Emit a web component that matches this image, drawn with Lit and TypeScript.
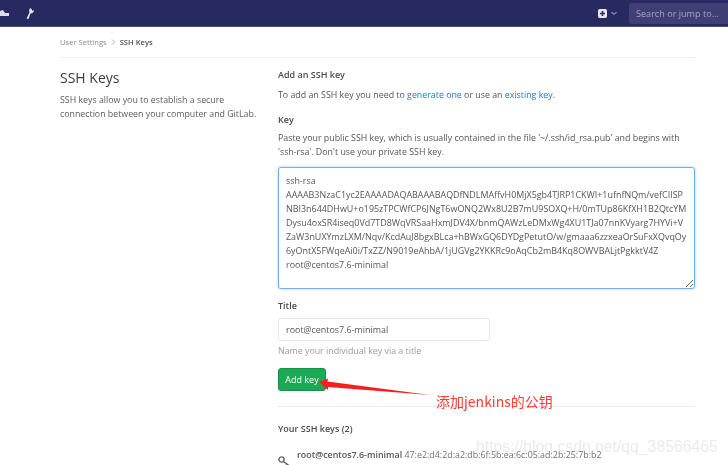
import { LitElement, html, css } from "lit";
import { customElement } from "lit/decorators.js";

const KEY = `ssh-rsa
AAAAB3NzaC1yc2EAAAADAQABAAABAQDfNDLMAffvH0MjX5gb4TJRP1CKWI+1ufnfNQm/vefCIISP
NBI3n644DHwU+o195zTPCWfCP6JNgT6wONQ2Wx8U2B7mU9SOXQ+H/0mTUp86KfXH1B2QtcYM
Dysu4oxSR4iseq0Vd7TD8WqVRSaaHxmJDV4X/bnmQAWzLeDMxWg4XU1TJa07nnKVyarg7HYVi+V
ZaW3nUXYmzLXM/Nqv/KcdAuJ8bgxBLca+hBWxGQ6DYDgPetutO/w/gmaaa6zzxeaOrSuFxXQvqOy
6yOntX5FWqeAi0i/TxZZ/N9019eAhbA/1jUGVg2YKKRc9oAqCb2mB4Kq8OWVBALjtPgkktV4Z
root@centos7.6-minimal`;

@customElement("app-root")
export class AppRoot extends LitElement {
  static styles = css`
    :host { display: block; width: 728px; height: 465px; overflow: hidden; position: relative; background: #fff;
      font-family: "Open Sans", "Noto Sans", sans-serif; font-size: 8.9px; color: #4f4f4f; filter: blur(0.45px); }
    .nav { height: 26px; background: #292961; border-bottom: 1px solid #4b4b80; display: flex; align-items: center; }
    .nav .chart { width: 9px; height: 7px; margin-top: 1px; flex: none; }
    .nav .wrench { margin-left: 16px; width: 9px; height: 11px; flex: none; }
    .spacer { flex: 1; }
    .plus { width: 9px; height: 9px; flex: none; }
    .chev { width: 6px; height: 5px; margin-left: 4px; flex: none; }
    .search { flex: none; width: 99px; margin-left: 12px; height: 21px; background: #3f3f74; border-radius: 3px 0 0 3px; color: #a4a4cc;
      display: flex; align-items: center; padding-left: 7px; font-size: 9.1px; box-sizing: border-box; white-space: nowrap; overflow: hidden; }
    .wrap { margin: 0 33px 0 60px; }
    .crumbs { height: 30px; display: flex; align-items: center; gap: 4px; border-bottom: 1px solid #f0f0f0; font-size: 7.6px; color: #8a8a8a; }
    .crumbs b { color: #4f4f4f; font-weight: 600; }
    .crumbs svg { width: 5px; height: 6px; }
    .cols { display: grid; grid-template-columns: 218px 1fr; }
    h1 { margin: 10px 0 0; font-size: 14px; line-height: 20px; font-weight: 500; color: #3a3a3a; }
    .intro { margin: 6px 0 0; font-size: 8.82px; line-height: 13.5px; color: #5c5c5c; }
    .main { padding-top: 10px; }
    .label { font-weight: 600; font-size: 9px; line-height: 13px; color: #4a4a4a; }
    p { margin: 0; line-height: 14px; font-size: 8.83px; color: #555; }
    .p1 { margin-top: 6.5px; }
    a { color: #1f78d1; text-decoration: none; }
    .k { margin-top: 11.5px; }
    .p2 { margin-top: 4.5px; }
    textarea { display: block; box-sizing: border-box; width: 417px; height: 122px; margin-top: 8px; padding: 6px 7px; resize: vertical;
      font: inherit; font-size: 8.94px; line-height: 14px; color: #555; border: 1px solid #73afea; border-radius: 3px;
      box-shadow: 0 0 3px #9cc8f2; outline: none; overflow: hidden; background: #fff; }
    .t { margin-top: 10.5px; }
    .input { box-sizing: border-box; width: 212px; height: 23px; margin-top: 5.5px; padding: 0 7px; border: 1px solid #e8e8e8; border-radius: 3px;
      display: flex; align-items: center; font-size: 8.94px; color: #555; }
    .help { margin-top: 3px; color: #9b9b9b; }
    .btn { box-sizing: border-box; margin-top: 10px; width: 48px; height: 23px; background: #1aaa55; color: #fff; border-radius: 3px; border: 1px solid #168f48;
      display: flex; align-items: center; justify-content: center; font-size: 9px; }
    .rule { height: 1px; background: #ececec; margin-top: 15px; }
    .yours { margin-top: 15px; font-weight: 600; color: #4a4a4a; }
    .row { display: flex; margin-top: 13px; }
    .row svg { width: 12px; height: 11px; margin-top: 8px; margin-right: 7px; flex: none; }
    .row b { font-weight: 600; color: #555; }
    .row span { color: #707070; }
    .anno { position: absolute; left: 436px; top: 391px; color: #ff3b30; font-size: 14px; line-height: 20px;
      font-family: "Noto Sans CJK SC", "Noto Sans", sans-serif; }
    .arrow { position: absolute; left: 315px; top: 375px; width: 120px; height: 25px; }
    .mark { position: absolute; left: 476px; top: 438px; font-family: "Liberation Sans", sans-serif; font-size: 15.75px; color: rgba(170,170,170,0.25); white-space: nowrap; }
  `;

  render() {
    return html`
      <div class="nav">
        <svg class="chart" viewBox="0 0 9 7"><path d="M0 1L3 0l2 3h4v3H0z" fill="#dcdcec"/></svg>
        <svg class="wrench" viewBox="0 0 9 11"><path d="M5 0C4 2 4 3.5 4.5 4.5L1.5 10.5l2 .5L5.5 5.5C7.5 5.5 9 4 9 2L7.5 3 6.5 1z" fill="#e6e6f2"/></svg>
        <div class="spacer"></div>
        <svg class="plus" viewBox="0 0 11 11"><path fill-rule="evenodd" d="M2 0h7a2 2 0 0 1 2 2v7a2 2 0 0 1-2 2H2a2 2 0 0 1-2-2V2a2 2 0 0 1 2-2zM4.5 2.5v2h-2v2h2v2h2v-2h2v-2h-2v-2z" fill="#e6e6f2"/></svg>
        <svg class="chev" viewBox="0 0 6 5"><path d="M.5 1l2.5 2.5L5.500 1" fill="none" stroke="#c8c8de" stroke-width="1"/></svg>
        <div class="search">Search or jump to...</div>
      </div>
      <div class="wrap">
        <div class="crumbs">User Settings
          <svg viewBox="0 0 5 6"><path d="M1 .5l2.5 2.500L1 5.500" fill="none" stroke="#999" stroke-width=".8"/></svg>
          <b>SSH Keys</b></div>
        <div class="cols">
          <div>
            <h1>SSH Keys</h1>
            <div class="intro">SSH keys allow you to establish a secure<br />connection between your computer and GitLab.</div>
          </div>
          <div class="main">
            <div class="label">Add an SSH key</div>
            <p class="p1">To add an SSH key you need to <a>generate one</a> or use an <a>existing key</a>.</p>
            <div class="label k">Key</div>
            <p class="p2">Paste your public SSH key, which is usually contained in the file '~/.ssh/id_rsa.pub' and begins with<br />'ssh-rsa'. Don't use your private SSH key.</p>
            <textarea wrap="off" .value=${KEY}></textarea>
            <div class="label t">Title</div>
            <div class="input">root@centos7.6-minimal</div>
            <p class="help">Name your individual key via a title</p>
            <div class="btn">Add key</div>
            <div class="rule"></div>
            <div class="label yours">Your SSH keys (2)</div>
            <div class="row">
              <svg viewBox="0 0 12 11"><circle cx="3.5" cy="3.5" r="2.6" fill="none" stroke="#666" stroke-width="1.4"/><path d="M5.5 5.5L11 9.5M9 8l-1.500 2.500" stroke="#666" stroke-width="1.4" fill="none"/></svg>
              <div><b>root@centos7.6-minimal</b> <span>47:e2:d4:2d:a2:db:6f:5b:ea:6c:05:ad:2b:25:7b:b2</span></div>
            </div>
          </div>
        </div>
      </div>
      <svg class="arrow" viewBox="0 0 120 25"><path d="M4 7L13 3.5L12.5 6.5L115 20L13 12L13 15z" fill="#f5201d"/></svg>
      <div class="anno">添加jenkins的公钥</div>
      <div class="mark">https://blog.csdn.net/qq_38566465</div>
    `;
  }
}
